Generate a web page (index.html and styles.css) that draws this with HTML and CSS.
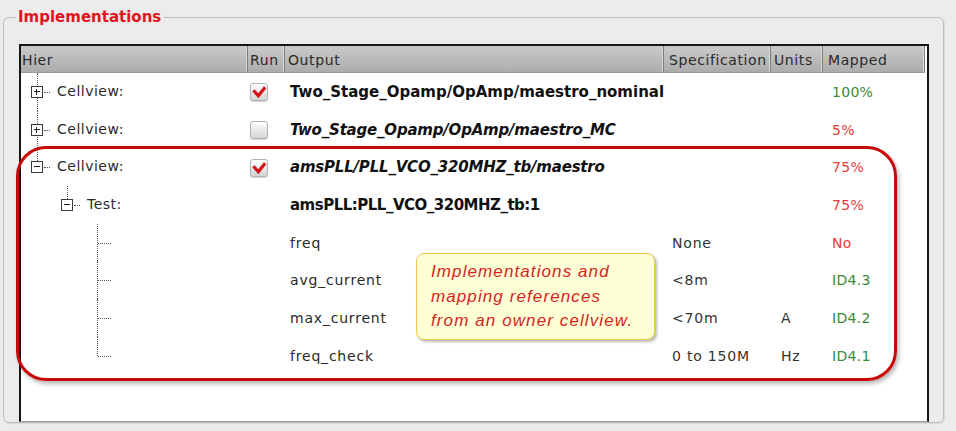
FILE: index.html
```html
<!DOCTYPE html>
<html>
<head>
<meta charset="utf-8">
<link rel="stylesheet" href="styles.css">
</head>
<body>
<fieldset class="group">
  <legend class="group-title">Implementations</legend>
  <div class="table">
    <div class="head">
      <div class="hc">Hier</div>
      <div class="hc">Run</div>
      <div class="hc">Output</div>
      <div class="hc">Specification</div>
      <div class="hc">Units</div>
      <div class="hc last">Mapped</div>
    </div>
    <div class="tbody">
      <div class="row">
        <div class="hier"><span class="v v0 full"></span><span class="box plus lv0"></span><span class="tick lv0t"></span><span class="label">Cellview:</span></div>
        <div class="run"><span class="cb on"><svg viewBox="0 0 18 18" width="18" height="18"><path d="M4.5 8.5 L8.3 12.8 L14.2 5.5" fill="none" stroke="#d41414" stroke-width="3.2" stroke-linecap="square"/></svg></span></div>
        <div class="out b">Two_Stage_Opamp/OpAmp/maestro_nominal</div>
        <div class="spec"></div>
        <div class="units"></div>
        <div class="map ok">100%</div>
      </div>
      <div class="row">
        <div class="hier"><span class="v v0 full"></span><span class="box plus lv0"></span><span class="tick lv0t"></span><span class="label">Cellview:</span></div>
        <div class="run"><span class="cb"></span></div>
        <div class="out bi">Two_Stage_Opamp/OpAmp/maestro_MC</div>
        <div class="spec"></div>
        <div class="units"></div>
        <div class="map bad">5%</div>
      </div>
      <div class="row">
        <div class="hier"><span class="v v0 top"></span><span class="box minus lv0"></span><span class="tick lv0t"></span><span class="label">Cellview:</span></div>
        <div class="run"><span class="cb on"><svg viewBox="0 0 18 18" width="18" height="18"><path d="M4.5 8.5 L8.3 12.8 L14.2 5.5" fill="none" stroke="#d41414" stroke-width="3.2" stroke-linecap="square"/></svg></span></div>
        <div class="out bi">amsPLL/PLL_VCO_320MHZ_tb/maestro</div>
        <div class="spec"></div>
        <div class="units"></div>
        <div class="map bad">75%</div>
      </div>
      <div class="row">
        <div class="hier"><span class="v v1 top"></span><span class="box minus lv1"></span><span class="tick lv1t"></span><span class="label l1">Test:</span></div>
        <div class="run"></div>
        <div class="out b tight">amsPLL:PLL_VCO_320MHZ_tb:1</div>
        <div class="spec"></div>
        <div class="units"></div>
        <div class="map bad">75%</div>
      </div>
      <div class="row">
        <div class="hier"><span class="v v2 full"></span><span class="tick lv2t"></span></div>
        <div class="run"></div>
        <div class="out">freq</div>
        <div class="spec">None</div>
        <div class="units"></div>
        <div class="map bad">No</div>
      </div>
      <div class="row">
        <div class="hier"><span class="v v2 full"></span><span class="tick lv2t"></span></div>
        <div class="run"></div>
        <div class="out">avg_current</div>
        <div class="spec">&lt;8m</div>
        <div class="units"></div>
        <div class="map ok">ID4.3</div>
      </div>
      <div class="row">
        <div class="hier"><span class="v v2 full"></span><span class="tick lv2t"></span></div>
        <div class="run"></div>
        <div class="out">max_current</div>
        <div class="spec">&lt;70m</div>
        <div class="units">A</div>
        <div class="map ok">ID4.2</div>
      </div>
      <div class="row">
        <div class="hier"><span class="v v2 half"></span><span class="tick lv2t"></span></div>
        <div class="run"></div>
        <div class="out">freq_check</div>
        <div class="spec">0 to 150M</div>
        <div class="units">Hz</div>
        <div class="map ok">ID4.1</div>
      </div>
      <div class="highlight"></div>
      <div class="callout">Implementations and<br>mapping references<br>from an owner cellview.</div>
    </div>
  </div>
</fieldset>
</body>
</html>
```
FILE: styles.css
```css
html, body {
  margin: 0;
  padding: 0;
}
body {
  background: #ececec;
  font-family: "DejaVu Sans", sans-serif;
  font-size: 14px;
  color: #262626;
  width: 956px;
  height: 431px;
  overflow: hidden;
}
.group {
  margin: 8px 12px 0 3px;
  padding: 0 14px 0 15px;
  border: 1px solid #bdbdbd;
  border-radius: 6px;
  box-shadow: 1px 1px 1px rgba(0,0,0,0.08);
}
.group-title {
  margin-left: -3px;
  padding: 0 3px 0 2px;
  font-weight: bold;
  font-size: 15px;
  line-height: 18px;
  color: #e0141c;
}
.table {
  margin-top: 18px;
  height: 378px;
  box-sizing: border-box;
  border: 2px solid #161616;
  border-bottom: 1px solid #9a9a9a;
  background: #fff;
  display: flex;
  flex-direction: column;
}
.head, .row {
  display: grid;
  grid-template-columns: 227px 37px 379px 107px 52px 1fr;
}
.head {
  height: 27px;
  flex: none;
  background: linear-gradient(#cacaca, #acacac);
  border-bottom: 1px solid #9d9d9d;
  box-sizing: border-box;
  margin-right: 2px;
}
.hc {
  line-height: 28px;
  padding-left: 3px;
  letter-spacing: 0.6px;
  color: #2a2a2a;
  border-right: 1px solid #7c7c7c;
  box-shadow: inset -1px 0 0 #dadada;
  white-space: nowrap;
  overflow: hidden;
}
.hc:first-child { padding-left: 1px; }
.hc:nth-child(2) { padding-left: 2px; }
.hc:nth-child(4) { padding-left: 5px; }
.hc:nth-child(6) { padding-left: 5px; }
.tbody {
  position: relative;
  flex: 1;
}
.row {
  height: 37.7px;
  align-items: center;
  white-space: nowrap;
}
.hier {
  position: relative;
  height: 100%;
}
.label {
  position: absolute;
  left: 36px;
  top: 0;
  line-height: 37.7px;
  color: #2a2a2a;
  letter-spacing: 0.5px;
}
.label.l1 { left: 66px; }
.v {
  position: absolute;
  width: 0;
  border-left: 1px dotted #555;
}
.v0 { left: 16px; }
.v1 { left: 46px; }
.v2 { left: 76px; }
.v.full { top: 0; bottom: 0; }
.v.top { top: 0; height: 13px; }
.v.half { top: 0; height: 19px; }
.box {
  position: absolute;
  top: 13px;
  width: 10px;
  height: 10px;
  border: 1px solid #3a3a3a;
  background: #fff;
}
.box::before {
  content: "";
  position: absolute;
  left: 2px;
  top: 4px;
  width: 6px;
  height: 1px;
  background: #222;
}
.box.plus::after {
  content: "";
  position: absolute;
  left: 4px;
  top: 2px;
  width: 1px;
  height: 6px;
  background: #222;
}
.lv0 { left: 10px; }
.lv1 { left: 40px; }
.tick {
  position: absolute;
  top: 19px;
  height: 0;
  border-top: 1px dotted #555;
}
.lv0t { left: 23px; width: 6px; }
.lv1t { left: 53px; width: 6px; }
.lv2t { left: 77px; width: 13px; }
.run { padding-left: 2px; display: flex; align-items: center; }
.cb {
  width: 18px;
  height: 18px;
  box-sizing: border-box;
  border: 1px solid #b2b2b2;
  border-radius: 3px;
  background: linear-gradient(#ffffff, #d4d4d4);
  box-shadow: 0 1px 1px rgba(0,0,0,0.18);
  position: relative;
  margin-top: 1px;
}
.cb svg { position: absolute; left: -1px; top: -1px; }
.out { padding-left: 5px; color: #2a2a2a; letter-spacing: 0.8px; }
.out.b { font-weight: bold; font-size: 15px; color: #111; letter-spacing: 0; }
.out.bi { font-weight: bold; font-style: italic; font-size: 15px; color: #111; letter-spacing: -0.2px; }
.out.tight { letter-spacing: -0.5px; }
.spec { padding-left: 8px; color: #333; letter-spacing: 0.8px; }
.units { padding-left: 10px; color: #333; letter-spacing: 0.8px; }
.map { padding-left: 9px; letter-spacing: 0.3px; }
.map.ok { color: #3b8a3b; }
.map.bad { color: #e83a3a; }
.highlight {
  position: absolute;
  left: -5px;
  top: 73px;
  width: 881px;
  height: 235px;
  box-sizing: border-box;
  border: 3px solid #c80808;
  border-radius: 30px;
  box-shadow: 2px 3px 4px rgba(0,0,0,0.28);
  pointer-events: none;
}
.callout {
  position: absolute;
  left: 395px;
  top: 180px;
  width: 239px;
  height: 87px;
  box-sizing: border-box;
  padding: 6px 0 0 14px;
  background: #ffffd6;
  border: 1px solid #efc84a;
  border-radius: 8px;
  box-shadow: 2px 2px 3px rgba(0,0,0,0.28);
  font-family: "Liberation Sans", Arial, sans-serif;
  font-style: italic;
  font-size: 17px;
  letter-spacing: 1.1px;
  line-height: 24.5px;
  color: #d42424;
  white-space: nowrap;
}
```
